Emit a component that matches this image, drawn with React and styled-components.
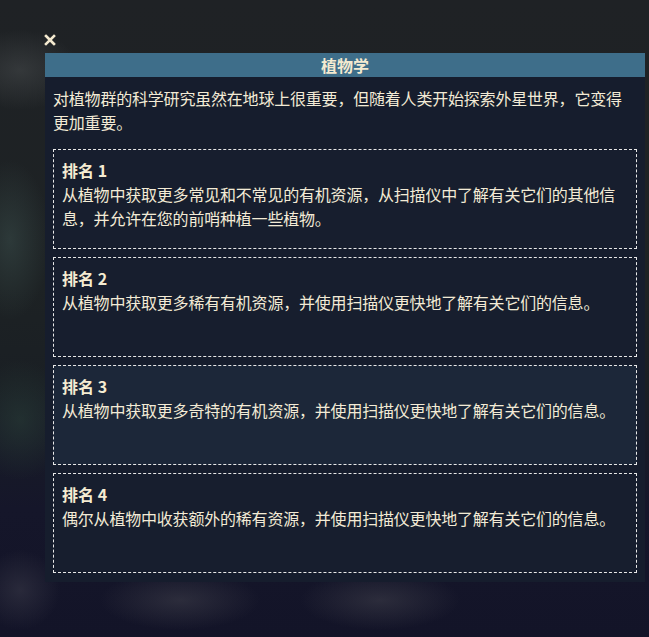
import React from 'react';
import styled, { createGlobalStyle } from 'styled-components';

const GlobalStyle = createGlobalStyle`
  html, body {
    margin: 0;
    padding: 0;
  }
  body {
    width: 649px;
    height: 637px;
    overflow: hidden;
    font-family: "Noto Sans CJK SC", "Noto Sans", sans-serif;
    background:
      radial-gradient(ellipse 60px 40px at 20px 70px, rgba(70, 74, 76, 0.55), transparent),
      radial-gradient(ellipse 40px 80px at 10px 240px, rgba(60, 80, 78, 0.5), transparent),
      radial-gradient(ellipse 50px 60px at 20px 420px, rgba(40, 60, 55, 0.6), transparent),
      radial-gradient(ellipse 80px 30px at 180px 600px, rgba(60, 60, 72, 0.6), transparent),
      radial-gradient(ellipse 80px 30px at 380px 600px, rgba(60, 60, 72, 0.6), transparent),
      radial-gradient(ellipse 40px 40px at 20px 590px, rgba(55, 55, 70, 0.6), transparent),
      linear-gradient(180deg, #1f2225 0%, #1d2224 45%, #1a1f24 60%, #15162a 80%, #131428 100%);
  }
`;

const Page = styled.div`
  padding: 33px 4px 0 45px;
  display: flex;
  flex-direction: column;
  align-items: flex-start;
`;

const CloseButton = styled.button`
  background: none;
  border: none;
  padding: 0;
  margin: 0 0 6px -2px;
  width: 14px;
  height: 14px;
  cursor: pointer;
  display: flex;
  align-items: center;
  justify-content: center;
`;

const Panel = styled.div`
  width: 600px;
  background: #161d2d;
  display: flex;
  flex-direction: column;
`;

const Header = styled.div`
  height: 24px;
  background: #3e6e8a;
  color: #f4ead0;
  font-size: 16px;
  font-weight: 700;
  line-height: 24px;
  text-align: center;
`;

const Body = styled.div`
  padding: 9px 8px 9px 8px;
  display: flex;
  flex-direction: column;
`;

const Intro = styled.p`
  margin: 0 0 15px 0;
  color: #f3ebd6;
  font-size: 16px;
  line-height: 24px;
  letter-spacing: -0.2px;
`;

const RankList = styled.div`
  display: flex;
  flex-direction: column;
  gap: 8px;
`;

const RankCard = styled.div`
  height: 100px;
  box-sizing: border-box;
  border: 1px dashed #e8e8e8;
  background: ${({ highlight }) => (highlight ? '#1c2739' : '#171e2e')};
  padding: 8px 8px;
`;

const RankTitle = styled.div`
  color: #f5ecd2;
  font-size: 16px;
  font-weight: 700;
  line-height: 24px;
`;

const RankText = styled.div`
  color: #f3ebd6;
  font-size: 16px;
  line-height: 24px;
  letter-spacing: -0.2px;
`;

const ranks = [
  {
    id: 1,
    text: '从植物中获取更多常见和不常见的有机资源，从扫描仪中了解有关它们的其他信息，并允许在您的前哨种植一些植物。',
  },
  {
    id: 2,
    text: '从植物中获取更多稀有有机资源，并使用扫描仪更快地了解有关它们的信息。',
  },
  {
    id: 3,
    text: '从植物中获取更多奇特的有机资源，并使用扫描仪更快地了解有关它们的信息。',
    highlight: true,
  },
  {
    id: 4,
    text: '偶尔从植物中收获额外的稀有资源，并使用扫描仪更快地了解有关它们的信息。',
  },
];

const App = () => {
  return (
    <>
      <GlobalStyle />
      <Page>
        <CloseButton aria-label="关闭">
          <svg width="12" height="12" viewBox="0 0 12 12">
            <path d="M2 2 L10 10 M10 2 L2 10" stroke="#f4ead0" strokeWidth="2.6" strokeLinecap="square" />
          </svg>
        </CloseButton>
        <Panel>
          <Header>植物学</Header>
          <Body>
            <Intro>
              对植物群的科学研究虽然在地球上很重要，但随着人类开始探索外星世界，它变得更加重要。
            </Intro>
            <RankList>
              {ranks.map((rank) => (
                <RankCard key={rank.id} highlight={rank.highlight}>
                  <RankTitle>排名 {rank.id}</RankTitle>
                  <RankText>{rank.text}</RankText>
                </RankCard>
              ))}
            </RankList>
          </Body>
        </Panel>
      </Page>
    </>
  );
};

export default App;
